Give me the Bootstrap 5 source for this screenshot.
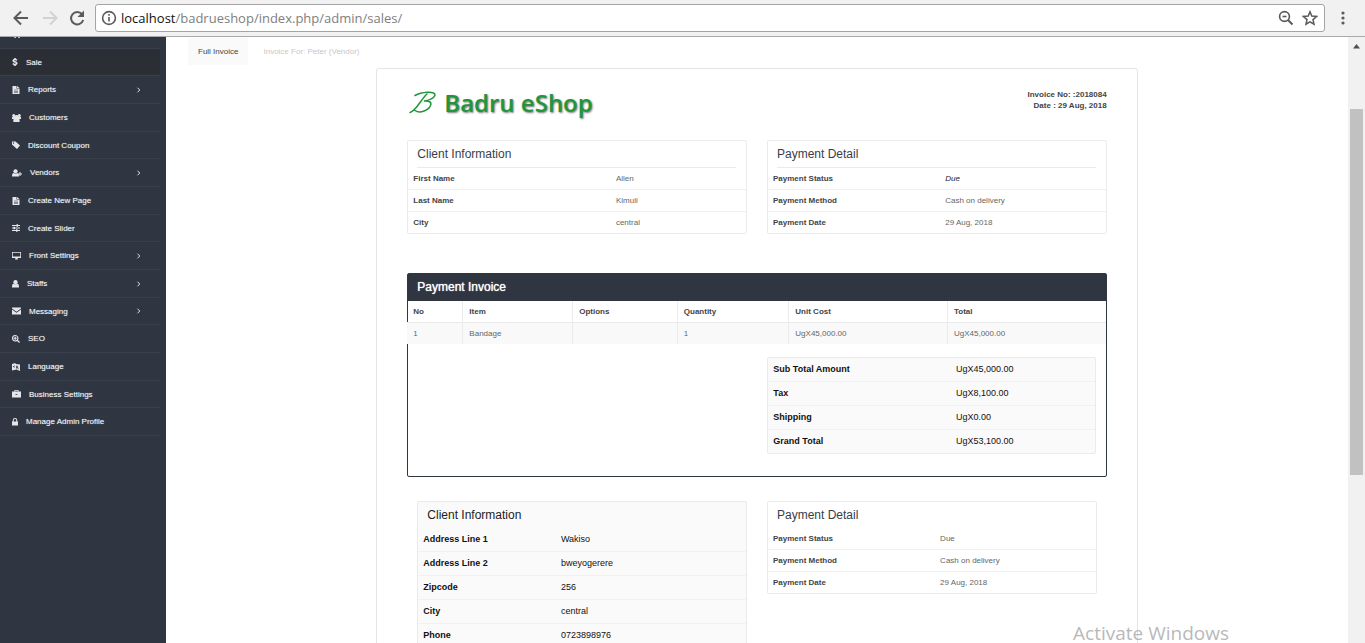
<!DOCTYPE html>
<html lang="en">
<head>
<meta charset="utf-8">
<meta name="viewport" content="width=device-width, initial-scale=1">
<title>Badru eShop - Sales</title>
<link href="https://cdn.jsdelivr.net/npm/bootstrap@5.3.0/dist/css/bootstrap.min.css" rel="stylesheet">
<style>
body { font-family: "Liberation Sans", Arial, sans-serif; font-size: 8px; line-height: 11px; color: #555; background: #fff; }
a { text-decoration: none; }

/* browser toolbar */
.toolbar { background: #f1f1f1; border-bottom: 1px solid #a9a9a9; padding: 4px 14px 4px 12px; }
.toolbar button { line-height: 0; color: #5a5a5a; }
.omnibox { height: 28px; background: #fff; border: 1px solid #a5a5a5; border-radius: 3px; padding: 0 6px 0 5px; margin-left: 9px; margin-right: 10px; }
.address { font-family: "Open Sans", sans-serif; font-size: 13px; line-height: 24px; color: #808080; }
.address b { font-weight: 400; color: #111; }

/* sidebar */
.side { width: 166px; background: #303641; }
.side ul { width: 160px; }
.side li { height: 28px; border-bottom: 1px solid #393f4b; }
.side li:nth-child(3n+2) { height: 27px; }
.side li:first-child { height: 12px; }
.side li:first-child a { align-items: flex-end; padding-bottom: 10px; }
.side li.current { background: #2b2e35; }
.side a { color: #f2f4f7; padding: 0 18px 0 12px; gap: 8px; height: 100%; text-shadow: 0 0 1px #8f949e; }
.side svg { flex: none; fill: #e4e6ea; }

/* invoice */
.doc-tabs { padding: 1px 0 3px 22px; }
.doc-tabs a { padding: 8px 10px; color: #c8c8c8; }
.doc-tabs a.active { background: #fafafa; color: #444; }
.doc-tabs a + a { margin-left: 5px; }
.sheet { border: 1px solid #e4e4e4; border-radius: 3px; padding: 20px 30px 0; min-height: 620px; }
.brand-name { font-family: "Open Sans", sans-serif; font-weight: 600; font-size: 24px; line-height: 28px; color: #1f963a; text-shadow: 1px 1px 2px #777; margin-left: 7px; }
.invoice-no { color: #444; }
.letterhead { padding-bottom: 23px; }
.gap-20 { gap: 20px; }
.pane { flex: 1 1 0; border: 1px solid #ebebeb; border-radius: 2px; }
.pane h2 { font-size: 12px; line-height: 26px; font-weight: 400; color: #373e4a; margin: 0 10px 0 9px; }
.ruled h2 { border-bottom: 1px solid #ebebeb; }
.kv, .lines { width: 100%; border-collapse: separate; border-spacing: 0; }
.kv th, .kv td { height: 22px; padding: 0 5px; }
.kv tr:first-child > * { height: 21px; }
.kv tr + tr > * { border-top: 1px solid #f1f1f1; }
.kv th { color: #444; }
.kv td { color: #666; }
.roomy { background: #fafafa; }
.roomy h2 { line-height: 26px; color: #222; }
.roomy .kv { font-size: 9px; }
.roomy .kv th, .roomy .kv td { height: 24px; color: #111; }
.roomy .kv tr:first-child > * { height: 23px; }
.charges { border: 1px solid #303641; border-radius: 2px; margin-top: 39px; padding-bottom: 22px; }
.charges h2 { font-size: 12px; line-height: 27px; font-weight: 400; background: #303641; color: #fff; padding: 0 9px; margin: 0; text-shadow: 0 0 1px #fff; }
.lines { table-layout: fixed; }
.lines th { height: 21px; padding: 0 6px; color: #444; }
.lines td { height: 22px; padding: 0 6px; background: #f9f9f9; color: #666; border-top: 1px solid #ebebeb; }
.lines th:first-child, .lines td:first-child { padding-left: 5px; }
.lines th + th, .lines td + td { border-left: 1px solid #ebebeb; }
.lines td:first-child { box-shadow: -1px 0 0 #f9f9f9; }
.totals { margin: 13px 10px 0 359px; }
.annex { padding: 0 10px; }

/* scroll track and desktop notice */
.track { width: 17px; background: #f1f1f1; padding: 7px 2px 0; }
.thumb { height: 366px; width: 13px; background: #c1c1c1; margin-top: 60px; }
.notice { position: absolute; right: 136px; bottom: 0; font-family: "Open Sans", sans-serif; font-size: 19px; line-height: 20px; color: #b9b9b9; }
</style>
</head>
<body>
<svg class="d-none" aria-hidden="true">
  <symbol id="i-cart" viewBox="0 0 16 16"><path d="M0 1h3l1 2h12l-2 7H5l.5 1H14v1H4L2 2.500H0z"/><circle cx="5.500" cy="14" r="1.800"/><circle cx="12.500" cy="14" r="1.800"/></symbol>
  <symbol id="i-dollar" viewBox="0 0 10 16"><path stroke="#e4e6ea" stroke-width="1" d="M4 0h2v2c1.500.2 2.600.8 3.200 1.300L8.200 5.200C7 4.300 5.600 4 4.800 4 3.500 4 3 4.500 3 5.200 3 7.300 9.600 6.600 9.600 10.600c0 2-1.500 3.200-3.600 3.500V16H4v-1.900c-1.700-.2-3-1-3.700-1.700l1.300-1.900c1.200 1.100 2.400 1.500 3.400 1.500 1.300 0 1.900-.6 1.900-1.300C6.900 8.400.4 9.200.4 5.300.4 3.500 2 2.200 4 2z"/></symbol>
  <symbol id="i-file" viewBox="0 0 14 16"><path fill-rule="evenodd" d="M0 0h8v5h6v11H0zM9 0l5 4H9zM3 7.500v.8h8v-.8zM3 10v.8h8V10zM3 12.500v.8h8v-.8z"/></symbol>
  <symbol id="i-users" viewBox="0 0 18 16"><circle cx="3.500" cy="3" r="3"/><circle cx="14.500" cy="3" r="3"/><circle cx="9" cy="6" r="4"/><path d="M0 10V7c0-1 1-2 2-1.500h14c1-.5 2 .5 2 1.500v3zM3 16c-1-4 0-8 3-7.500 2 1.300 4 1.300 6 0 3-.5 4 3.500 3 7.500z"/></symbol>
  <symbol id="i-tag" viewBox="0 0 16 16"><path fill-rule="evenodd" d="M0 1h7l9 8-6 7-10-9zM3 2.600A1.300 1.300 0 1 0 3 5.300 1.300 1.300 0 0 0 3 2.600z"/></symbol>
  <symbol id="i-user-plus" viewBox="0 0 20 16"><circle cx="7" cy="4.500" r="4.200"/><path d="M0 15c0-4 1-7 3.500-7 2 1.600 5 1.600 7 0C13 8 14 11 14 15zM15 6h2v3h3v2h-3v3h-2v-3h-3V9h3z"/></symbol>
  <symbol id="i-sliders" viewBox="0 0 16 16"><path d="M0 2h9V.5h3V2h4v2h-4v1.500H9V4H0zM0 7h3V5.500h3V7h10v2H6v1.500H3V9H0zM0 12h8v-1.500h3V12h5v2h-5v1.500H8V14H0z"/></symbol>
  <symbol id="i-screen" viewBox="0 0 18 16"><path fill-rule="evenodd" d="M0 0h18v12h-7l1 3H6l1-3H0zM1.500 1.500v7.500h15V1.500z"/></symbol>
  <symbol id="i-user" viewBox="0 0 14 16"><circle cx="7" cy="4.500" r="4.300"/><path d="M0 15c0-5 1-8 3.500-7.500 2 1.600 5 1.600 7 0C13 7 14 10 14 15z"/></symbol>
  <symbol id="i-mail" viewBox="0 0 18 16"><path d="M0 1h18v2L9 9.500 0 3zM0 5l9 6.500L18 5v10H0z"/></symbol>
  <symbol id="i-seo" viewBox="0 0 16 16"><path fill-rule="evenodd" d="M6.500 0a6.500 6.500 0 0 1 5.300 10.200L16 14.200 14.200 16l-4.100-4.200A6.500 6.500 0 1 1 6.500 0zm0 2.200a4.300 4.300 0 1 0 0 8.600 4.300 4.300 0 0 0 0-8.600zM5.300 3.500h2.400v1.800h1.800v2.400H7.700v1.800H5.300V7.700H3.500V5.300h1.800z"/></symbol>
  <symbol id="i-lang" viewBox="0 0 16 16"><path fill-rule="evenodd" d="M0 2l7-2v2l9 1v13l-7-3-9 2zM9 5l-1 6 1.200.4.300-1.400 2 .6.400 1.700 1.300.4L11.500 6zm1.200 1.800l.8 2.700-1.200-.4zM2.500 6l3-1v1l-1 1 1 2-1 .5-1-1.500-1 .7z"/></symbol>
  <symbol id="i-case" viewBox="0 0 18 16"><path fill-rule="evenodd" d="M5 3V0h8v3h5v12H0V3zm1.500-1.500V3h5V1.500zM7 8.500V10h4V8.500z"/></symbol>
  <symbol id="i-lock" viewBox="0 0 12 16"><path fill-rule="evenodd" d="M1.500 7V4.500a4.500 4.500 0 0 1 9 0V7H12v8H0V7zm2 0h5V4.500a2.500 2.500 0 0 0-5 0z"/></symbol>
  <symbol id="i-next" viewBox="0 0 6 8"><path d="M1 1l3 3-3 3" fill="none" stroke="#e4e6ea" stroke-width="1.300"/></symbol>
</svg>

<div class="d-flex flex-column vh-100 overflow-hidden position-relative">
  <header class="toolbar d-flex align-items-center">
    <button class="btn p-0 border-0" aria-label="Back"><svg width="18" height="18" viewBox="0 0 18 18" fill="none" stroke="#5a5a5a" stroke-width="2"><path d="M16 9H3M9 2.500L2.500 9 9 15.500"/></svg></button>
    <button class="btn p-0 border-0 ms-2 ps-1" aria-label="Forward"><svg width="18" height="18" viewBox="0 0 18 18" fill="none" stroke="#d2d2d2" stroke-width="2"><path d="M1 9h13M8 2.500L14.500 9 8 15.500"/></svg></button>
    <button class="btn p-0 border-0 ms-2" aria-label="Reload"><svg width="18" height="18" viewBox="0 0 18 18"><path d="M14 5.200A6.200 6.200 0 1 0 15.200 11" fill="none" stroke="#5a5a5a" stroke-width="2"/><path d="M16 1.500V8H9.500z" fill="#5a5a5a"/></svg></button>
    <div class="omnibox d-flex align-items-center flex-grow-1">
      <svg width="16" height="16" viewBox="0 0 16 16" fill="none" stroke="#5a5a5a" stroke-width="1.600"><circle cx="8" cy="8" r="6.400"/><path d="M8 7v4.500M8 4v1.700"/></svg>
      <div class="address flex-grow-1 ms-1"><b>localhost</b>/badrueshop/index.php/admin/sales/</div>
      <button class="btn p-0 border-0" aria-label="Zoom"><svg width="16" height="16" viewBox="0 0 16 16" fill="none" stroke="#5a5a5a" stroke-width="1.600"><circle cx="6.500" cy="6.500" r="4.900"/><path d="M4.500 6.500h4"/><path d="M10 10l4.500 4.500" stroke-width="2"/></svg></button>
      <button class="btn p-0 border-0 ms-2" aria-label="Bookmark"><svg width="16" height="16" viewBox="0 0 16 16" fill="none" stroke="#5a5a5a" stroke-width="1.500"><path d="M8 1.800l1.800 4.300 4.700.4-3.500 3.100 1 4.600-4-2.400-4 2.400 1-4.600-3.500-3.100 4.700-.4z"/></svg></button>
    </div>
    <button class="btn p-0 border-0" aria-label="Menu"><svg width="16" height="16" viewBox="0 0 16 16" fill="#5a5a5a"><circle cx="8" cy="3" r="1.600"/><circle cx="8" cy="8" r="1.600"/><circle cx="8" cy="13" r="1.600"/></svg></button>
  </header>

  <div class="d-flex flex-grow-1 overflow-hidden">
    <nav class="side flex-shrink-0" aria-label="Admin">
      <ul class="list-unstyled m-0">
        <li class="overflow-hidden"><a href="#" class="d-flex" aria-label="Products"><svg width="9" height="9"><use href="#i-cart"/></svg></a></li>
        <li class="current"><a href="#" class="d-flex align-items-center"><svg width="6" height="8"><use href="#i-dollar"/></svg>Sale</a></li>
        <li><a href="#" class="d-flex align-items-center"><svg width="8" height="8"><use href="#i-file"/></svg>Reports<svg class="ms-auto" width="6" height="6"><use href="#i-next"/></svg></a></li>
        <li><a href="#" class="d-flex align-items-center"><svg width="9" height="8"><use href="#i-users"/></svg>Customers</a></li>
        <li><a href="#" class="d-flex align-items-center"><svg width="8" height="8"><use href="#i-tag"/></svg>Discount Coupon</a></li>
        <li><a href="#" class="d-flex align-items-center"><svg width="10" height="8"><use href="#i-user-plus"/></svg>Vendors<svg class="ms-auto" width="6" height="6"><use href="#i-next"/></svg></a></li>
        <li><a href="#" class="d-flex align-items-center"><svg width="8" height="8"><use href="#i-file"/></svg>Create New Page</a></li>
        <li><a href="#" class="d-flex align-items-center"><svg width="8" height="8"><use href="#i-sliders"/></svg>Create Slider</a></li>
        <li><a href="#" class="d-flex align-items-center"><svg width="9" height="8"><use href="#i-screen"/></svg>Front Settings<svg class="ms-auto" width="6" height="6"><use href="#i-next"/></svg></a></li>
        <li><a href="#" class="d-flex align-items-center"><svg width="7" height="8"><use href="#i-user"/></svg>Staffs<svg class="ms-auto" width="6" height="6"><use href="#i-next"/></svg></a></li>
        <li><a href="#" class="d-flex align-items-center"><svg width="9" height="8"><use href="#i-mail"/></svg>Messaging<svg class="ms-auto" width="6" height="6"><use href="#i-next"/></svg></a></li>
        <li><a href="#" class="d-flex align-items-center"><svg width="8" height="8"><use href="#i-seo"/></svg>SEO</a></li>
        <li><a href="#" class="d-flex align-items-center"><svg width="8" height="8"><use href="#i-lang"/></svg>Language</a></li>
        <li><a href="#" class="d-flex align-items-center"><svg width="9" height="8"><use href="#i-case"/></svg>Business Settings</a></li>
        <li><a href="#" class="d-flex align-items-center"><svg width="6" height="8"><use href="#i-lock"/></svg>Manage Admin Profile</a></li>
      </ul>
    </nav>

    <main class="flex-grow-1 overflow-hidden">
      <nav class="doc-tabs d-flex" aria-label="Invoices">
        <a href="#" class="active">Full Invoice</a>
        <a href="#">Invoice For: Peter (Vendor)</a>
      </nav>
      <div class="px-1 mx-3">
      <div class="row g-0">
        <article class="col-8 offset-2 sheet">
          <div class="letterhead d-flex justify-content-between align-items-start">
            <div class="d-flex align-items-center">
              <svg width="30" height="28" viewBox="0 1 30 28" fill="none" stroke="#1f963a" stroke-width="1.500" stroke-linecap="round"><path d="M8 7.500C14 4 28.500 2.500 28 7c-.5 3.500-7 5.500-11 6 5-.5 8 1 6.500 4.500C22 22 13 26 8 22.500M20 6C15 10 9 23 3 24.500"/></svg>
              <span class="brand-name">Badru eShop</span>
            </div>
            <div class="invoice-no text-end fw-bold">Invoice No: :2018084<br>Date : 29 Aug, 2018</div>
          </div>

          <div class="d-flex gap-20">
            <section class="pane ruled">
              <h2>Client Information</h2>
              <table class="kv"><colgroup><col style="width:60%"><col></colgroup>
                <tr><th>First Name</th><td>Allen</td></tr>
                <tr><th>Last Name</th><td>Kimuli</td></tr>
                <tr><th>City</th><td>central</td></tr>
              </table>
            </section>
            <section class="pane ruled">
              <h2>Payment Detail</h2>
              <table class="kv"><colgroup><col style="width:51%"><col></colgroup>
                <tr><th>Payment Status</th><td class="fst-italic text-dark">Due</td></tr>
                <tr><th>Payment Method</th><td>Cash on delivery</td></tr>
                <tr><th>Payment Date</th><td>29 Aug, 2018</td></tr>
              </table>
            </section>
          </div>

          <section class="charges">
            <h2>Payment Invoice</h2>
            <table class="lines">
              <colgroup><col style="width:7.750%"><col style="width:15.750%"><col style="width:15%"><col style="width:16%"><col style="width:22.750%"><col style="width:22.750%"></colgroup>
              <thead><tr><th>No</th><th>Item</th><th>Options</th><th>Quantity</th><th>Unit Cost</th><th>Total</th></tr></thead>
              <tbody><tr><td>1</td><td>Bandage</td><td></td><td>1</td><td>UgX45,000.00</td><td>UgX45,000.00</td></tr></tbody>
            </table>
            <div class="pane roomy totals">
              <table class="kv"><colgroup><col style="width:56%"><col></colgroup>
                <tr><th>Sub Total Amount</th><td>UgX45,000.00</td></tr>
                <tr><th>Tax</th><td>UgX8,100.00</td></tr>
                <tr><th>Shipping</th><td>UgX0.00</td></tr>
                <tr><th>Grand Total</th><td>UgX53,100.00</td></tr>
              </table>
            </div>
          </section>

          <div class="annex d-flex gap-20 align-items-start mt-4">
            <section class="pane roomy">
              <h2>Client Information</h2>
              <table class="kv"><colgroup><col style="width:42%"><col></colgroup>
                <tr><th>Address Line 1</th><td>Wakiso</td></tr>
                <tr><th>Address Line 2</th><td>bweyogerere</td></tr>
                <tr><th>Zipcode</th><td>256</td></tr>
                <tr><th>City</th><td>central</td></tr>
                <tr><th>Phone</th><td>0723898976</td></tr>
              </table>
            </section>
            <section class="pane">
              <h2>Payment Detail</h2>
              <table class="kv"><colgroup><col style="width:51%"><col></colgroup>
                <tr><th>Payment Status</th><td>Due</td></tr>
                <tr><th>Payment Method</th><td>Cash on delivery</td></tr>
                <tr><th>Payment Date</th><td>29 Aug, 2018</td></tr>
              </table>
            </section>
          </div>
        </article>
      </div>
      </div>
    </main>

    <div class="track flex-shrink-0" aria-hidden="true">
      <svg class="d-block mx-auto" width="7" height="5" viewBox="0 0 7 5"><path d="M3.500 0L7 4.500H0z" fill="#505050"/></svg>
      <div class="thumb"></div>
    </div>
  </div>
  <div class="notice">Activate Windows</div>
</div>
<script src="https://cdn.jsdelivr.net/npm/bootstrap@5.3.0/dist/js/bootstrap.bundle.min.js"></script>
</body>
</html>
